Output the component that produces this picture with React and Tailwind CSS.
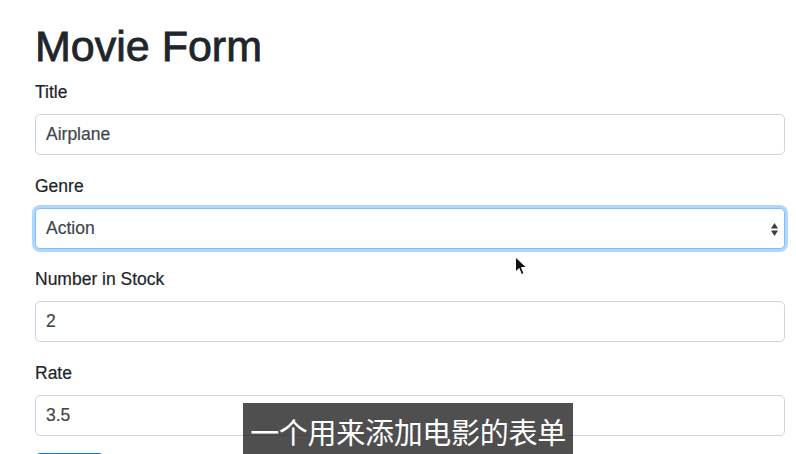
import React from "react";

const font = { fontFamily: '"Liberation Sans", Arial, sans-serif' };

function Field({ label, value }) {
  return (
    <div className="mb-[17.5px]">
      <label className="block text-[17.5px] leading-[26px] text-[#212529] mb-[9px] [-webkit-text-stroke:0.2px_#212529]">
        {label}
      </label>
      <input
        type="text"
        defaultValue={value}
        className="block w-full h-[41px] px-[10px] text-[17.5px] text-[#3f454b] bg-white border border-[#ced4da] rounded-[5px] outline-none [-webkit-text-stroke:0.2px_#3f454b]"
      />
    </div>
  );
}

export default function App() {
  return (
    <div className="relative w-[796px] h-[454px] overflow-hidden bg-white" style={font}>
      <div className="ml-[35px] w-[750px] pt-[20px]">
        <h1 className="text-[43px] leading-[52px] font-normal text-[#212529] mb-[7px] [-webkit-text-stroke:0.8px_#212529]">
          Movie Form
        </h1>

        <Field label="Title" value="Airplane" />

        {/* Genre select (focused) */}
        <div className="mb-[17.5px]">
          <label className="block text-[17.5px] leading-[26px] text-[#212529] mb-[9px] [-webkit-text-stroke:0.2px_#212529]">
            Genre
          </label>
          <div className="relative h-[41px] px-[10px] flex items-center text-[17.5px] text-[#3f454b] bg-white border border-[#80bdff] rounded-[5px] shadow-[0_0_0_3px_rgba(0,123,255,0.3)] [-webkit-text-stroke:0.2px_#3f454b]">
            Action
            <svg
              className="absolute right-[5px] top-[13px]"
              width="9"
              height="15"
              viewBox="0 0 9 15"
            >
              <path d="M4.5 1 L8 6.5 H1 Z" fill="#3a3a3a" />
              <path d="M4.5 14 L8 8.5 H1 Z" fill="#3a3a3a" />
            </svg>
          </div>
        </div>

        <Field label="Number in Stock" value="2" />
        <Field label="Rate" value="3.5" />

        <button className="h-[38px] px-[14px] text-[17px] text-white bg-[#007bff] border border-[#007bff] rounded-[5px]">
          Save
        </button>
      </div>

      {/* mouse cursor */}
      <svg
        className="absolute left-[514px] top-[256px]"
        width="14"
        height="21"
        viewBox="0 0 14 21"
      >
        <path
          d="M1.5 1 L1.5 16 L5 12.5 L7.5 18.5 L10 17.5 L7.5 11.5 L12.5 11.5 Z"
          fill="#111"
          stroke="#fff"
          strokeWidth="1"
          strokeLinejoin="round"
        />
      </svg>

      {/* subtitle */}
      <div className="absolute left-[243px] top-[403px] w-[330px] h-[60px] bg-[rgba(40,40,40,0.82)] flex justify-center pt-[10px]">
        <span
          className="text-white text-[29px] leading-[36px] tracking-[-0.3px]"
          style={{ fontFamily: '"Noto Sans CJK SC", sans-serif' }}
        >
          一个用来添加电影的表单
        </span>
      </div>
    </div>
  );
}
